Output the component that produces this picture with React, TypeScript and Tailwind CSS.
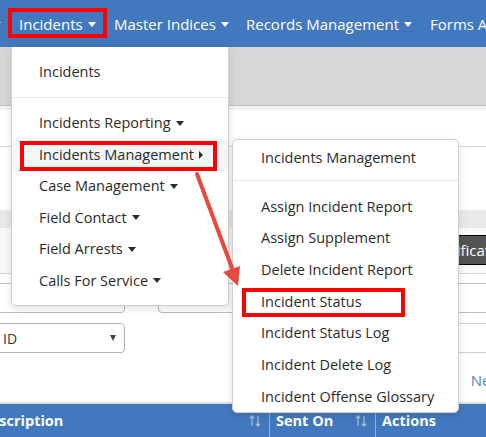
import React from "react";

const CaretDown = ({ white = false }: { white?: boolean }) =>
  white ? (
    <span className="inline-block w-0 h-0 border-x-[4.5px] border-x-transparent border-t-[5px] border-t-white" />
  ) : (
    <span className="inline-block w-0 h-0 border-x-[4.5px] border-x-transparent border-t-[5px] border-t-[#2b2b2b]" />
  );

const SortIcon = () => (
  <svg width="12" height="12" viewBox="0 0 12 12" className="shrink-0">
    <g stroke="#a9c1e2" strokeWidth="1.2" fill="none">
      <path d="M3 11V1M0.8 3.4L3 1l2.2 2.4" />
      <path d="M9 1v10M6.8 8.6L9 11l2.2-2.4" />
    </g>
  </svg>
);

const NavItem = ({ label, w }: { label: string; w: string }) => (
  <div className={`flex items-center gap-[5px] shrink-0 ${w}`}>
    <span>{label}</span>
    <CaretDown white />
  </div>
);

const MenuItem = ({
  label,
  caret,
  hl = false,
}: {
  label: string;
  caret?: "down" | "right";
  hl?: boolean;
}) => (
  <div
    className={`h-[31.5px] flex items-center gap-[5px] pl-[27px] ${hl ? "bg-[#f5f6f8]" : ""}`}
  >
    <span>{label}</span>
    {caret === "down" && <CaretDown />}
    {caret === "right" && (
      <span className="inline-block w-0 h-0 border-y-[4.5px] border-y-transparent border-l-[4.5px] border-l-[#2b2b2b]" />
    )}
  </div>
);

const SubItem = ({ label }: { label: string }) => (
  <div className="h-[31.67px] flex items-center pl-[28px]">{label}</div>
);

export default function App() {
  return (
    <div className="relative w-[486px] h-[437px] overflow-hidden bg-white font-['Open_Sans',sans-serif] text-[#2b2b2b]">
      {/* Navbar */}
      <div className="h-[47px] bg-[#4279be] flex items-center text-white text-[15px] whitespace-nowrap pt-[1px]">
        <div className="w-[19px] shrink-0 flex items-center">
          <span className="-ml-[7px] flex">
            <CaretDown white />
          </span>
        </div>
        <NavItem label="Incidents" w="w-[95px]" />
        <NavItem label="Master Indices" w="w-[132px]" />
        <NavItem label="Records Management" w="w-[184px]" />
        <span className="shrink-0">Forms Admin</span>
      </div>
      {/* gray band */}
      <div className="h-[58px] bg-[#d7d7d7]" />
      {/* content */}
      <div className="h-[42px] border-t border-t-[#c4c4c4] border-b border-b-[#dcdcdc] bg-white">
        <div className="h-[4px] bg-[#efefef]" />
      </div>
      <div className="h-[63px] bg-white" />
      <div className="h-[18px] bg-[#e9e9e9]" />
      <div className="h-[46px] bg-[#f9f9f9] border-b border-b-[#d8d8d8] flex items-start pt-[7px] whitespace-nowrap">
        <div className="ml-[150px] w-[84px] h-[30px] bg-[#b49b5e] border border-[#7a6a3c] flex items-center justify-end pr-[2px] text-[14px] text-[#222]">
          3
        </div>
        <div className="ml-[190px] w-[230px] h-[30px] bg-[#545454] border border-black flex items-center pl-[78px] text-white text-[15px]">
          Notifications
        </div>
      </div>
      <div className="pt-[9px] flex flex-col gap-[10px]">
        <div className="flex h-[30px]">
          <div className="-ml-[10px] w-[135px] border border-[#bdbdbd] rounded-[4px]" />
          <div className="ml-[33px] flex-1 border border-[#bdbdbd] rounded-[4px] -mr-[20px]" />
        </div>
        <div className="flex h-[30px]">
          <div className="-ml-[10px] w-[135px] border border-[#b4b4b4] rounded-[4px] flex items-center pl-[12px] pr-[8px] justify-between text-[14px] text-[#333]">
            <span>ID</span>
            <span className="inline-block w-0 h-0 border-x-[3.5px] border-x-transparent border-t-[6px] border-t-[#444]" />
          </div>
          <div className="ml-[175px] flex-1 border border-[#cfcfcf] -mr-[20px]" />
        </div>
      </div>
      <div className="h-[49px] flex items-center justify-end pt-[6px] pr-0 overflow-hidden whitespace-nowrap">
        <span className="text-[15px] text-[#5a86b8] -mr-[16px]">New</span>
      </div>
      <div className="h-[2px] bg-[#dedede]" />
      {/* table header */}
      <div className="h-[33px] bg-[#4279be] flex items-stretch text-white font-bold text-[14.5px] whitespace-nowrap">
        <div className="w-[270px] flex items-center justify-between border-r border-r-[#8fb0da] pr-[8px]">
          <span className="-ml-[20px]">Description</span>
          <SortIcon />
        </div>
        <div className="w-[106px] flex items-center justify-between border-r border-r-[#8fb0da] pl-[6px] pr-[8px]">
          <span>Sent On</span>
          <SortIcon />
        </div>
        <div className="flex items-center pl-[6px]">Actions</div>
      </div>

      {/* Dropdown menu */}
      <div className="absolute left-[11px] top-[47px] w-[218px] h-[259px] bg-white border border-[#cfcfcf] border-t-0 rounded-b-[5px] shadow-[0_3px_8px_rgba(0,0,0,0.12)] text-[14.5px] whitespace-nowrap pt-[9px]">
        <div className="h-[31.5px] flex items-center pl-[27px]">Incidents</div>
        <div className="mt-[9px] mb-[10px] h-px bg-[#e6e6e6]" />
        <MenuItem label="Incidents Reporting" caret="down" />
        <MenuItem label="Incidents Management" caret="right" hl />
        <MenuItem label="Case Management" caret="down" />
        <MenuItem label="Field Contact" caret="down" />
        <MenuItem label="Field Arrests" caret="down" />
        <MenuItem label="Calls For Service" caret="down" />
      </div>

      {/* Submenu */}
      <div className="absolute left-[232px] top-[139px] w-[227px] h-[274px] bg-white border border-[#cfcfcf] rounded-[5px] shadow-[0_3px_8px_rgba(0,0,0,0.12)] text-[14.5px] whitespace-nowrap pt-[2px]">
        <SubItem label="Incidents Management" />
        <div className="mt-[6px] mb-[10px] h-px bg-[#e6e6e6]" />
        <SubItem label="Assign Incident Report" />
        <SubItem label="Assign Supplement" />
        <SubItem label="Delete Incident Report" />
        <SubItem label="Incident Status" />
        <SubItem label="Incident Status Log" />
        <SubItem label="Incident Delete Log" />
        <SubItem label="Incident Offense Glossary" />
      </div>

      {/* Annotations */}
      <div className="absolute left-[8px] top-[8px] w-[99px] h-[30px] border-[4px] border-[#ff0000]" />
      <div className="absolute left-[20px] top-[141px] w-[197px] h-[30px] border-[4px] border-[#ff0000]" />
      <div className="absolute left-[242px] top-[288px] w-[163px] h-[29px] border-[4px] border-[#ff0000]" />
      <svg className="absolute left-0 top-0" width="486" height="437" viewBox="0 0 486 437">
        <line x1="197" y1="174" x2="232" y2="268" stroke="#e8493d" strokeWidth="4" strokeLinecap="round" />
        <polygon points="238,286 240,266 223,272" fill="#e8493d" />
      </svg>
    </div>
  );
}
